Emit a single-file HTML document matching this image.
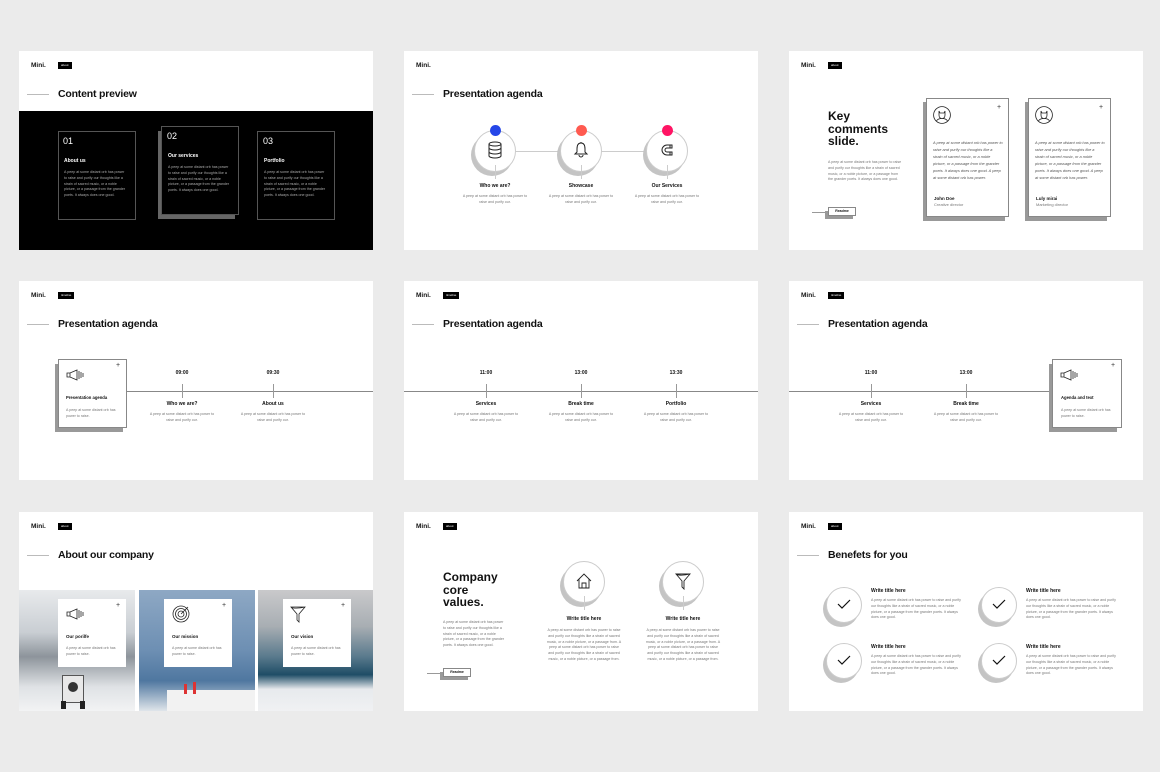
<!DOCTYPE html>
<html><head><meta charset="utf-8"><style>
*{margin:0;padding:0;box-sizing:border-box}
body{width:1160px;height:772px;background:#ebebeb;position:relative;overflow:hidden;font-family:"Liberation Sans",sans-serif;color:#111}
.s{position:absolute;width:354px;height:199px;background:#fff;overflow:hidden}
.a{position:absolute}
.logo{position:absolute;left:12px;top:11px;font-size:6.5px;font-weight:bold}
.tag{position:absolute;left:39px;top:11px;height:7px;padding:0 3px;background:#000;color:#fff;font-size:3px;line-height:7px}
.tl{position:absolute;left:8px;top:43px;width:22px;height:1px;background:#bbb}
.tt{position:absolute;left:39px;top:37px;font-size:10.5px;font-weight:bold;white-space:nowrap;letter-spacing:-.2px}
.b{font-size:3.6px;line-height:5.8px;color:#777}
.h{font-size:5px;font-weight:bold;white-space:nowrap}
.c{text-align:center}
.card{position:absolute;background:#fff;border:1px solid #888}
.sh{position:absolute;background:#999}
.circ{position:absolute;border-radius:50%;background:#fff;border:1px solid #ccc;box-shadow:-3px 4px 0 #c4c4c4}
.plus{position:absolute;font-size:7px;line-height:7px;color:#333}
</style></head><body>

<!-- slide 1 -->
<div class="s" style="left:19px;top:51px">
<div class="logo">Mini.</div><div class="tag">about</div><div class="tl"></div><div class="tt">Content preview</div>
<div class="a" style="left:0;top:60px;width:354px;height:139px;background:#000"></div>
<div class="card" style="left:39px;top:80px;width:78px;height:89px;background:#000;border-color:#555"></div>
<div class="sh" style="left:139px;top:80px;width:77px;height:88px;background:#666"></div>
<div class="card" style="left:142px;top:75px;width:78px;height:89px;background:#000;border-color:#555"></div>
<div class="card" style="left:238px;top:80px;width:78px;height:89px;background:#000;border-color:#555"></div>
<div class="a" style="left:44px;top:85px;color:#fff;font-size:9px">01</div>
<div class="a h" style="left:45px;top:107px;color:#fff">About us</div>
<div class="a b" style="left:45px;top:119px;width:62px;color:#aaa">A peep at some distant orb has power to raise and purify our thoughts like a strain of sacred music, or a noble picture, or a passage from the grander poets. It always does one good.</div>
<div class="a" style="left:148px;top:80px;color:#fff;font-size:9px">02</div>
<div class="a h" style="left:149px;top:102px;color:#fff">Our services</div>
<div class="a b" style="left:149px;top:114px;width:62px;color:#aaa">A peep at some distant orb has power to raise and purify our thoughts like a strain of sacred music, or a noble picture, or a passage from the grander poets. It always does one good.</div>
<div class="a" style="left:244px;top:85px;color:#fff;font-size:9px">03</div>
<div class="a h" style="left:245px;top:107px;color:#fff">Portfolio</div>
<div class="a b" style="left:245px;top:119px;width:62px;color:#aaa">A peep at some distant orb has power to raise and purify our thoughts like a strain of sacred music, or a noble picture, or a passage from the grander poets. It always does one good.</div>
</div>

<!-- slide 2 -->
<div class="s" style="left:404px;top:51px">
<div class="logo">Mini.</div><div class="tl"></div><div class="tt">Presentation agenda</div>
<div class="a" style="left:110px;top:100px;width:140px;height:1px;background:#ccc"></div>
<div class="circ" style="left:70px;top:79px;width:42px;height:42px"></div>
<div class="circ" style="left:156px;top:79px;width:42px;height:42px"></div>
<div class="circ" style="left:242px;top:79px;width:42px;height:42px"></div>
<svg class="a" style="left:83px;top:90px" width="16" height="18" viewBox="0 0 16 18" fill="none" stroke="#222" stroke-width="1"><ellipse cx="8" cy="3" rx="6" ry="2"/><path d="M2 3v12c0 1 3 2 6 2s6-1 6-2V3M2 7c0 1 3 2 6 2s6-1 6-2M2 11c0 1 3 2 6 2s6-1 6-2"/></svg>
<svg class="a" style="left:169px;top:90px" width="16" height="18" viewBox="0 0 16 18" fill="none" stroke="#222" stroke-width="1"><path d="M8 2c-3 0-4 3-4 6v3l-2 2h12l-2-2V8c0-3-1-6-4-6zM6 14a2 2 0 0 0 4 0M8 1v1"/></svg>
<svg class="a" style="left:255px;top:91px" width="16" height="16" viewBox="0 0 16 16" fill="none" stroke="#222" stroke-width="1"><path d="M13 3H8a5 5 0 0 0 0 10h5v-3H8a2 2 0 0 1 0-4h5z M11 3v3M11 10v3"/></svg>
<div class="a" style="left:86px;top:74px;width:11px;height:11px;border-radius:50%;background:#2546e8"></div>
<div class="a" style="left:172px;top:74px;width:11px;height:11px;border-radius:50%;background:#ff5a50"></div>
<div class="a" style="left:258px;top:74px;width:11px;height:11px;border-radius:50%;background:#ff1464"></div>
<div class="a" style="left:91px;top:114px;width:1px;height:14px;background:#ccc"></div>
<div class="a" style="left:177px;top:114px;width:1px;height:14px;background:#ccc"></div>
<div class="a" style="left:263px;top:114px;width:1px;height:14px;background:#ccc"></div>
<div class="a h c" style="left:51px;top:132px;width:80px">Who we are?</div>
<div class="a h c" style="left:137px;top:132px;width:80px">Showcase</div>
<div class="a h c" style="left:223px;top:132px;width:80px">Our Services</div>
<div class="a b c" style="left:56px;top:143px;width:70px">A peep at some distant orb has power to raise and purify our.</div>
<div class="a b c" style="left:142px;top:143px;width:70px">A peep at some distant orb has power to raise and purify our.</div>
<div class="a b c" style="left:228px;top:143px;width:70px">A peep at some distant orb has power to raise and purify our.</div>
</div>

<!-- slide 3 -->
<div class="s" style="left:789px;top:51px">
<div class="logo">Mini.</div><div class="tag">about</div>
<div class="a" style="left:39px;top:59px;font-size:12px;line-height:12.5px;font-weight:bold">Key<br>comments<br>slide.</div>
<div class="a b" style="left:39px;top:109px;width:75px">A peep at some distant orb has power to raise and purify our thoughts like a strain of sacred music, or a noble picture, or a passage from the grander poets. It always does one good.</div>
<div class="a" style="left:23px;top:161px;width:15px;height:1px;background:#999"></div>
<div class="sh" style="left:36px;top:160px;width:28px;height:8px"></div>
<div class="card" style="left:39px;top:156px;width:28px;height:9px;font-size:3.5px;line-height:7px;text-align:center;font-weight:bold">Readme</div>
<div class="sh" style="left:134px;top:51px;width:82px;height:119px"></div>
<div class="card" style="left:137px;top:47px;width:83px;height:119px"></div>
<div class="sh" style="left:236px;top:51px;width:82px;height:119px"></div>
<div class="card" style="left:239px;top:47px;width:83px;height:119px"></div>
<svg class="a" style="left:144px;top:55px" width="18" height="18" viewBox="0 0 18 18" fill="none" stroke="#222" stroke-width=".8"><circle cx="9" cy="9" r="8.4"/><path d="M6 5l1 2h4l1-2v4c0 2-1 3.5-3 3.5S6 11 6 9zM3.5 15c1-2 3-2.5 5.5-2.5s4.5.5 5.5 2.5"/></svg>
<svg class="a" style="left:246px;top:55px" width="18" height="18" viewBox="0 0 18 18" fill="none" stroke="#222" stroke-width=".8"><circle cx="9" cy="9" r="8.4"/><path d="M6 5l1 2h4l1-2v4c0 2-1 3.5-3 3.5S6 11 6 9zM3.5 15c1-2 3-2.5 5.5-2.5s4.5.5 5.5 2.5"/></svg>
<div class="plus" style="left:208px;top:53px">+</div><div class="plus" style="left:310px;top:53px">+</div>
<div class="a b" style="left:144px;top:89px;width:70px;font-style:italic;font-size:3.9px;line-height:6.9px;color:#555">A peep at some distant orb has power to raise and purify our thoughts like a strain of sacred music, or a noble picture, or a passage from the grander poets. It always does one good. A peep at some distant orb has power.</div>
<div class="a b" style="left:246px;top:89px;width:70px;font-style:italic;font-size:3.9px;line-height:6.9px;color:#555">A peep at some distant orb has power to raise and purify our thoughts like a strain of sacred music, or a noble picture, or a passage from the grander poets. It always does one good. A peep at some distant orb has power.</div>
<div class="a h" style="left:145px;top:145px;font-size:4.5px">John Doe</div>
<div class="a b" style="left:145px;top:151px;font-size:4px">Creative director</div>
<div class="a h" style="left:247px;top:145px;font-size:4.5px">Luly mirai</div>
<div class="a b" style="left:247px;top:151px;font-size:4px">Marketing director</div>
</div>

<!-- slide 4 -->
<div class="s" style="left:19px;top:281px">
<div class="logo">Mini.</div><div class="tag">timeline</div><div class="tl"></div><div class="tt">Presentation agenda</div>
<div class="a" style="left:107px;top:110px;width:247px;height:1px;background:#888"></div>
<div class="sh" style="left:36px;top:83px;width:68px;height:68px"></div>
<div class="card" style="left:39px;top:78px;width:69px;height:69px"></div>
<div class="plus" style="left:97px;top:81px">+</div>
<svg class="a" style="left:47px;top:88px" width="18" height="12" viewBox="0 0 18 12" fill="none" stroke="#222" stroke-width=".8"><path d="M1 4h3l7-3v10l-7-3H1zM4 4v4M13 2v8M15 3v6M17 4v4"/></svg>
<div class="a h" style="left:47px;top:114px;font-size:4.2px">Presentation agenda</div>
<div class="a b" style="left:47px;top:127px;width:50px">A peep at some distant orb has power to raise.</div>
<div class="a h c" style="left:143px;top:89px;width:40px">09:00</div>
<div class="a h c" style="left:234px;top:89px;width:40px">09:30</div>
<div class="a" style="left:163px;top:103px;width:1px;height:14px;background:#999"></div>
<div class="a" style="left:254px;top:103px;width:1px;height:14px;background:#999"></div>
<div class="a h c" style="left:123px;top:120px;width:80px">Who we are?</div>
<div class="a h c" style="left:214px;top:120px;width:80px">About us</div>
<div class="a b c" style="left:128px;top:131px;width:70px">A peep at some distant orb has power to raise and purify our.</div>
<div class="a b c" style="left:219px;top:131px;width:70px">A peep at some distant orb has power to raise and purify our.</div>
</div>

<!-- slide 5 -->
<div class="s" style="left:404px;top:281px">
<div class="logo">Mini.</div><div class="tag">timeline</div><div class="tl"></div><div class="tt">Presentation agenda</div>
<div class="a" style="left:0;top:110px;width:354px;height:1px;background:#888"></div>
<div class="a h c" style="left:62px;top:89px;width:40px">11:00</div>
<div class="a h c" style="left:157px;top:89px;width:40px">13:00</div>
<div class="a h c" style="left:252px;top:89px;width:40px">13:30</div>
<div class="a" style="left:82px;top:103px;width:1px;height:14px;background:#999"></div>
<div class="a" style="left:177px;top:103px;width:1px;height:14px;background:#999"></div>
<div class="a" style="left:272px;top:103px;width:1px;height:14px;background:#999"></div>
<div class="a h c" style="left:42px;top:120px;width:80px">Services</div>
<div class="a h c" style="left:137px;top:120px;width:80px">Break time</div>
<div class="a h c" style="left:232px;top:120px;width:80px">Portfolio</div>
<div class="a b c" style="left:47px;top:131px;width:70px">A peep at some distant orb has power to raise and purify our.</div>
<div class="a b c" style="left:142px;top:131px;width:70px">A peep at some distant orb has power to raise and purify our.</div>
<div class="a b c" style="left:237px;top:131px;width:70px">A peep at some distant orb has power to raise and purify our.</div>
</div>

<!-- slide 6 -->
<div class="s" style="left:789px;top:281px">
<div class="logo">Mini.</div><div class="tag">timeline</div><div class="tl"></div><div class="tt">Presentation agenda</div>
<div class="a" style="left:0;top:110px;width:264px;height:1px;background:#888"></div>
<div class="a h c" style="left:62px;top:89px;width:40px">11:00</div>
<div class="a h c" style="left:157px;top:89px;width:40px">13:00</div>
<div class="a" style="left:82px;top:103px;width:1px;height:14px;background:#999"></div>
<div class="a" style="left:177px;top:103px;width:1px;height:14px;background:#999"></div>
<div class="a h c" style="left:42px;top:120px;width:80px">Services</div>
<div class="a h c" style="left:137px;top:120px;width:80px">Break time</div>
<div class="a b c" style="left:47px;top:131px;width:70px">A peep at some distant orb has power to raise and purify our.</div>
<div class="a b c" style="left:142px;top:131px;width:70px">A peep at some distant orb has power to raise and purify our.</div>
<div class="sh" style="left:260px;top:83px;width:68px;height:68px"></div>
<div class="card" style="left:263px;top:78px;width:70px;height:69px"></div>
<div class="plus" style="left:322px;top:81px">+</div>
<svg class="a" style="left:271px;top:88px" width="18" height="12" viewBox="0 0 18 12" fill="none" stroke="#222" stroke-width=".8"><path d="M1 4h3l7-3v10l-7-3H1zM4 4v4M13 2v8M15 3v6M17 4v4"/></svg>
<div class="a h" style="left:272px;top:114px;font-size:4.2px">Agenda and text</div>
<div class="a b" style="left:272px;top:127px;width:50px">A peep at some distant orb has power to raise.</div>
</div>

<!-- slide 7 -->
<div class="s" style="left:19px;top:512px">
<div class="logo">Mini.</div><div class="tag">about</div><div class="tl"></div><div class="tt">About our company</div>
<div class="a" style="left:0;top:78px;width:116px;height:121px;background:linear-gradient(180deg,#e8eaec 0%,#c9ced3 35%,#8d949b 55%,#dfe2e5 80%,#f2f3f4 100%)"></div>
<div class="a" style="left:43px;top:163px;width:22px;height:28px;background:#e8e8e8;border:1px solid #555"></div>
<div class="a" style="left:49px;top:170px;width:10px;height:10px;border-radius:50%;background:#333"></div>
<div class="a" style="left:42px;top:189px;width:5px;height:8px;background:#222"></div>
<div class="a" style="left:61px;top:189px;width:5px;height:8px;background:#222"></div>
<div class="a" style="left:120px;top:78px;width:116px;height:121px;background:linear-gradient(180deg,#8ea8c4 0%,#6d8fb3 50%,#4f77a0 75%,#dfe5ea 100%)"></div>
<div class="a" style="left:148px;top:178px;width:88px;height:21px;background:#f2f2f2"></div>
<div class="a" style="left:165px;top:172px;width:3px;height:10px;background:#d33"></div>
<div class="a" style="left:174px;top:170px;width:3px;height:12px;background:#d33"></div>
<div class="a" style="left:239px;top:78px;width:115px;height:121px;background:linear-gradient(180deg,#c9c9cb 0%,#a8aeb3 30%,#5a7a8d 55%,#1f4d66 70%,#e7eaed 82%,#f0f1f3 100%)"></div>
<div class="card" style="left:39px;top:87px;width:68px;height:68px;border:none"></div>
<div class="card" style="left:145px;top:87px;width:68px;height:68px;border:none"></div>
<div class="card" style="left:264px;top:87px;width:68px;height:68px;border:none"></div>
<div class="plus" style="left:97px;top:90px">+</div><div class="plus" style="left:203px;top:90px">+</div><div class="plus" style="left:322px;top:90px">+</div>
<svg class="a" style="left:47px;top:96px" width="18" height="12" viewBox="0 0 18 12" fill="none" stroke="#222" stroke-width=".8"><path d="M1 4h3l7-3v10l-7-3H1zM4 4v4M13 2v8M15 3v6M17 4v4"/></svg>
<svg class="a" style="left:153px;top:93px" width="18" height="18" viewBox="0 0 18 18" fill="none" stroke="#222" stroke-width=".8"><circle cx="9" cy="9" r="8"/><circle cx="9" cy="9" r="5.5"/><circle cx="9" cy="9" r="3"/><path d="M9 9l7-7"/></svg>
<svg class="a" style="left:271px;top:93px" width="16" height="18" viewBox="0 0 16 18" fill="none" stroke="#222" stroke-width=".8"><path d="M1 2h14L9 9v8L7 15V9z M1 2c0 1 6 2 14 0"/></svg>
<div class="a h" style="left:47px;top:122px;font-size:4.5px">Our porilfe</div>
<div class="a h" style="left:153px;top:122px;font-size:4.5px">Our mission</div>
<div class="a h" style="left:272px;top:122px;font-size:4.5px">Our vision</div>
<div class="a b" style="left:47px;top:134px;width:50px">A peep at some distant orb has power to raise.</div>
<div class="a b" style="left:153px;top:134px;width:50px">A peep at some distant orb has power to raise.</div>
<div class="a b" style="left:272px;top:134px;width:50px">A peep at some distant orb has power to raise.</div>
</div>

<!-- slide 8 -->
<div class="s" style="left:404px;top:512px">
<div class="logo">Mini.</div><div class="tag">about</div>
<div class="a" style="left:39px;top:59px;font-size:12px;line-height:12.5px;font-weight:bold">Company<br>core<br>values.</div>
<div class="a b" style="left:39px;top:108px;width:62px">A peep at some distant orb has power to raise and purify our thoughts like a strain of sacred music, or a noble picture, or a passage from the grander poets. It always does one good.</div>
<div class="a" style="left:23px;top:161px;width:15px;height:1px;background:#999"></div>
<div class="sh" style="left:36px;top:160px;width:28px;height:8px"></div>
<div class="card" style="left:39px;top:156px;width:28px;height:9px;font-size:3.5px;line-height:7px;text-align:center;font-weight:bold">Readme</div>
<div class="circ" style="left:159px;top:49px;width:42px;height:42px"></div>
<div class="circ" style="left:258px;top:49px;width:42px;height:42px"></div>
<svg class="a" style="left:171px;top:60px" width="18" height="18" viewBox="0 0 18 18" fill="none" stroke="#222" stroke-width=".9"><path d="M2 9L9 2l7 7M4 7v9h10V7M7 16v-5h4v5"/></svg>
<svg class="a" style="left:271px;top:60px" width="16" height="18" viewBox="0 0 16 18" fill="none" stroke="#222" stroke-width=".9"><path d="M1 2h14L9 9v8L7 15V9z M1 2c0 1 6 2 14 0"/></svg>
<div class="a" style="left:180px;top:84px;width:1px;height:14px;background:#ccc"></div>
<div class="a" style="left:279px;top:84px;width:1px;height:14px;background:#ccc"></div>
<div class="a h c" style="left:140px;top:104px;width:80px">Write title here</div>
<div class="a h c" style="left:239px;top:104px;width:80px">Write title here</div>
<div class="a b c" style="left:142px;top:116px;width:76px">A peep at some distant orb has power to raise and purify our thoughts like a strain of sacred music, or a noble picture, or a passage from. A peep at some distant orb has power to raise and purify our thoughts like a strain of sacred music, or a noble picture, or a passage from.</div>
<div class="a b c" style="left:241px;top:116px;width:76px">A peep at some distant orb has power to raise and purify our thoughts like a strain of sacred music, or a noble picture, or a passage from. A peep at some distant orb has power to raise and purify our thoughts like a strain of sacred music, or a noble picture, or a passage from.</div>
</div>

<!-- slide 9 -->
<div class="s" style="left:789px;top:512px">
<div class="logo">Mini.</div><div class="tag">about</div><div class="tl"></div><div class="tt">Benefets for you</div>
<div class="circ" style="left:37px;top:75px;width:36px;height:36px"></div>
<div class="circ" style="left:192px;top:75px;width:36px;height:36px"></div>
<div class="circ" style="left:37px;top:131px;width:36px;height:36px"></div>
<div class="circ" style="left:192px;top:131px;width:36px;height:36px"></div>
<svg class="a" style="left:48px;top:87px" width="14" height="10" viewBox="0 0 14 10" fill="none" stroke="#111" stroke-width="1.2"><path d="M1 5l4 4 8-8"/></svg>
<svg class="a" style="left:203px;top:87px" width="14" height="10" viewBox="0 0 14 10" fill="none" stroke="#111" stroke-width="1.2"><path d="M1 5l4 4 8-8"/></svg>
<svg class="a" style="left:48px;top:143px" width="14" height="10" viewBox="0 0 14 10" fill="none" stroke="#111" stroke-width="1.2"><path d="M1 5l4 4 8-8"/></svg>
<svg class="a" style="left:203px;top:143px" width="14" height="10" viewBox="0 0 14 10" fill="none" stroke="#111" stroke-width="1.2"><path d="M1 5l4 4 8-8"/></svg>
<div class="a h" style="left:82px;top:76px">Write title here</div>
<div class="a h" style="left:237px;top:76px">Write title here</div>
<div class="a h" style="left:82px;top:132px">Write title here</div>
<div class="a h" style="left:237px;top:132px">Write title here</div>
<div class="a b" style="left:82px;top:86px;width:95px">A peep at some distant orb has power to raise and purify our thoughts like a strain of sacred music, or a noble picture, or a passage from the grander poets. It always does one good.</div>
<div class="a b" style="left:237px;top:86px;width:95px">A peep at some distant orb has power to raise and purify our thoughts like a strain of sacred music, or a noble picture, or a passage from the grander poets. It always does one good.</div>
<div class="a b" style="left:82px;top:142px;width:95px">A peep at some distant orb has power to raise and purify our thoughts like a strain of sacred music, or a noble picture, or a passage from the grander poets. It always does one good.</div>
<div class="a b" style="left:237px;top:142px;width:95px">A peep at some distant orb has power to raise and purify our thoughts like a strain of sacred music, or a noble picture, or a passage from the grander poets. It always does one good.</div>
</div>

</body></html>
